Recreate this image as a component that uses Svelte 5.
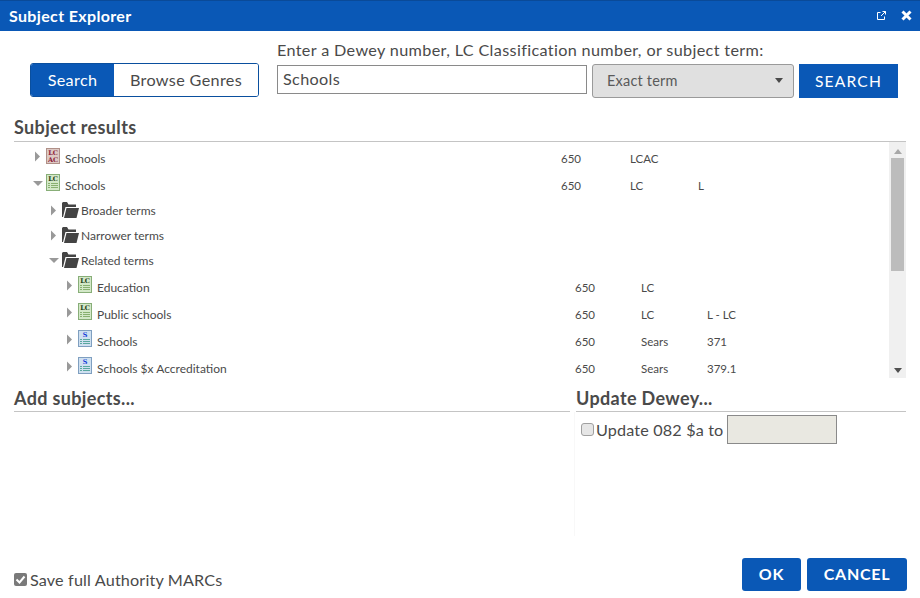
<script>
  const rows = [
    { depth: 0, open: false, icon: 'lcac', name: 'Schools', tag: '650', src: 'LCAC', cls: '' },
    { depth: 0, open: true, icon: 'lc', name: 'Schools', tag: '650', src: 'LC', cls: 'L' },
    { depth: 1, open: false, icon: 'folder', name: 'Broader terms' },
    { depth: 1, open: false, icon: 'folder', name: 'Narrower terms' },
    { depth: 1, open: true, icon: 'folder', name: 'Related terms' },
    { depth: 2, open: false, icon: 'lc', name: 'Education', tag: '650', src: 'LC', cls: '' },
    { depth: 2, open: false, icon: 'lc', name: 'Public schools', tag: '650', src: 'LC', cls: 'L - LC' },
    { depth: 2, open: false, icon: 's', name: 'Schools', tag: '650', src: 'Sears', cls: '371' },
    { depth: 2, open: false, icon: 's', name: 'Schools $x Accreditation', tag: '650', src: 'Sears', cls: '379.1' }
  ];
</script>

<div class="dialog">
  <header class="titlebar">
    <h1>Subject Explorer</h1>
    <div class="window-btns">
      <svg width="11" height="11" viewBox="0 0 11 11" fill="none" stroke="#fff" stroke-width="1">
        <path d="M4.5 2.5H1.5V9.5H8.5V6.5"/>
        <path d="M5 6L9.5 1.5M6.5 1.5H9.5V4.5"/>
      </svg>
      <svg width="11" height="11" viewBox="0 0 11 11" fill="none" stroke="#fff" stroke-width="3">
        <path d="M1.5 1.5L9.5 9.5M9.5 1.5L1.5 9.5"/>
      </svg>
    </div>
  </header>

  <section class="search-row">
    <div class="segmented">
      <button class="seg active">Search</button>
      <button class="seg">Browse Genres</button>
    </div>
    <div class="search-field">
      <label for="term">Enter a Dewey number, LC Classification number, or subject term:</label>
      <div class="search-controls">
        <input id="term" type="text" value="Schools" />
        <div class="select">
          <span>Exact term</span>
          <i class="caret"></i>
        </div>
        <button class="search-btn">SEARCH</button>
      </div>
    </div>
  </section>

  <section class="results">
    <h2>Subject results</h2>
    <div class="tree-wrap">
      <div class="tree">
        {#each rows as row}
          <div class="row depth-{row.depth}">
            <div class="name">
              {#if row.open}
                <svg class="toggle" width="11" height="11" viewBox="0 0 11 11"><path d="M0 3H10L5 8Z" fill="#999"/></svg>
              {:else}
                <svg class="toggle" width="11" height="11" viewBox="0 0 11 11"><path d="M2 0.5V10.5L7 5.5Z" fill="#999"/></svg>
              {/if}
              {#if row.icon === 'folder'}
                <svg class="folder" width="17" height="17" viewBox="0 0 17 17">
                  <path d="M0 2V16H1L3.5 6H14V3.5H6.5L5 1H1Z" fill="#444"/>
                  <path d="M4.5 7H17L14.5 17H2Z" fill="#444"/>
                </svg>
              {:else if row.icon === 'lcac'}
                <svg class="book" width="14" height="16" viewBox="0 0 14 16">
                  <rect x="0.5" y="0.5" width="13" height="15" fill="#ddc9c4" stroke="#b09088"/>
                  <text x="7" y="7" class="mark" fill="#8c1f3c">LC</text>
                  <text x="7" y="14" class="mark" fill="#8c1f3c">AC</text>
                </svg>
              {:else}
                <svg class="book" width="14" height="17" viewBox="0 0 14 17">
                  <rect x="0.5" y="0.5" width="13" height="16" fill={row.icon === 's' ? '#cfe0f0' : '#d3e8c8'} stroke={row.icon === 's' ? '#7f9fc0' : '#88ae78'}/>
                  <text x="7" y="7" class="mark" fill={row.icon === 's' ? '#1038d8' : '#1c3a14'}>{row.icon === 's' ? 'S' : 'LC'}</text>
                  <path d="M2 9.5H4M5 9.5H12M2 11.5H4M5 11.5H12M2 13.5H4M5 13.5H12" stroke={row.icon === 's' ? '#5aa8a0' : '#88b070'} fill="none"/>
                </svg>
              {/if}
              <span class="label">{row.name}</span>
            </div>
            <div>{row.tag ?? ''}</div>
            <div>{row.src ?? ''}</div>
            <div>{row.cls ?? ''}</div>
          </div>
        {/each}
      </div>
      <div class="scrollbar">
        <i class="arrow up"></i>
        <div class="thumb"></div>
        <i class="arrow down"></i>
      </div>
    </div>
  </section>

  <section class="lower">
    <div class="add-panel">
      <h2>Add subjects...</h2>
    </div>
    <div class="dewey-panel">
      <h2>Update Dewey...</h2>
      <div class="dewey-body">
        <input type="checkbox" id="dewey" />
        <label for="dewey">Update 082 $a to</label>
        <input class="dewey-input" type="text" disabled />
      </div>
    </div>
  </section>

  <footer class="footer">
    <label class="save">
      <span class="fake-check">
        <svg width="13" height="13" viewBox="0 0 13 13"><path d="M2.5 6.5L5.5 9.5L10.5 3.5" fill="none" stroke="#fff" stroke-width="2"/></svg>
      </span>
      Save full Authority MARCs
    </label>
    <div class="actions">
      <button class="action ok">OK</button>
      <button class="action cancel">CANCEL</button>
    </div>
  </footer>
</div>

<style>
  :global(body) {
    margin: 0;
    background: #fff;
  }

  .dialog {
    width: 920px;
    height: 598px;
    display: flex;
    flex-direction: column;
    font-family: Lato, "Open Sans", sans-serif;
    color: #4a4a4a;
    overflow: hidden;
  }

  .titlebar {
    box-sizing: border-box;
    height: 31px;
    flex: none;
    display: flex;
    align-items: center;
    justify-content: space-between;
    padding: 0 8px 1px 9px;
    background: #0a58b6;
    border-top: 1px solid #0a4a98;
  }

  h1 {
    margin: 0;
    font-size: 16px;
    letter-spacing: 0.35px;
    font-weight: 700;
    color: #fff;
  }

  .window-btns {
    display: flex;
    align-items: center;
    gap: 14px;
  }

  .search-row {
    flex: none;
    display: flex;
    align-items: flex-start;
    height: 83px;
    padding-left: 30px;
    box-sizing: border-box;
  }

  .segmented {
    display: flex;
    box-sizing: border-box;
    width: 229px;
    height: 34px;
    margin-top: 32px;
    border: 1px solid #0a4f9e;
    border-radius: 3px;
    overflow: hidden;
  }

  .seg {
    border: none;
    background: #fff;
    color: #4a4a4a;
    font: 16.2px Lato, sans-serif;
    letter-spacing: 0.35px;
    flex: 1;
    padding: 0 0 2px;
  }

  .seg.active {
    flex: none;
    width: 83px;
    background: #0a58b6;
    color: #fff;
  }

  .search-field {
    margin-left: 18px;
  }

  .search-field label {
    display: block;
    height: 33px;
    padding-top: 9px;
    box-sizing: border-box;
    font-size: 16.2px;
    letter-spacing: 0.35px;
    line-height: 20px;
    white-space: nowrap;
  }

  .search-controls {
    display: flex;
    align-items: flex-start;
  }

  #term {
    box-sizing: border-box;
    width: 310px;
    height: 29px;
    margin-top: 1px;
    padding: 0 5px 2px;
    border: 1px solid #8a8a8a;
    border-radius: 0;
    font: 16.2px Lato, sans-serif;
    letter-spacing: 0.35px;
    color: #4a4a4a;
  }

  .select {
    box-sizing: border-box;
    width: 202px;
    height: 34px;
    margin-left: 5px;
    display: flex;
    align-items: center;
    justify-content: space-between;
    padding: 0 10px 1px 14px;
    background: #e0e0e0;
    border: 1px solid #9a9a9a;
    border-radius: 3px;
    font-size: 14.5px;
    letter-spacing: 0.2px;
    color: #5a5a5a;
  }

  .caret {
    width: 0;
    height: 0;
    border-left: 4px solid transparent;
    border-right: 4px solid transparent;
    border-top: 5px solid #4a4a4a;
  }

  .search-btn {
    width: 99px;
    height: 34px;
    margin-left: 5px;
    border: none;
    background: #0a58b6;
    color: #fff;
    font: 15.6px Lato, sans-serif;
    letter-spacing: 1.2px;
    padding: 0;
  }

  h2 {
    margin: 0;
    height: 28px;
    box-sizing: border-box;
    padding-top: 3px;
    font-size: 18px;
    letter-spacing: 0.35px;
    line-height: 20px;
    font-weight: 700;
    color: #4a4a4a;
    border-bottom: 1px solid #c4c4c4;
  }

  .results {
    flex: none;
    margin: 0 14px;
    height: 264px;
  }

  .tree-wrap {
    display: flex;
    height: 236px;
  }

  .tree {
    flex: 1;
    overflow: hidden;
    padding-top: 2px;
  }

  .row {
    display: grid;
    grid-template-columns: 547px 69px 68px 1fr;
    align-items: center;
    box-sizing: border-box;
    height: 27px;
    padding-top: 2px;
    font-size: 11.5px;
  }

  .row.depth-1 {
    height: 25px;
    padding-top: 0;
  }

  .row.depth-2 {
    grid-template-columns: 561px 66px 66px 1fr;
  }

  .name {
    display: flex;
    align-items: center;
    font-size: 12px;
  }

  .depth-0 .name {
    padding-left: 19px;
  }

  .depth-1 .name {
    padding-left: 35px;
  }

  .depth-2 .name {
    padding-left: 51px;
  }

  .toggle {
    flex: none;
    margin-right: 2px;
    margin-top: -5px;
  }

  .depth-1 .toggle {
    margin-top: -1px;
  }

  .book {
    flex: none;
    margin-top: -6px;
  }

  .folder {
    flex: none;
    margin-top: -2px;
  }

  .mark {
    font-family: "DejaVu Serif", serif;
    font-size: 6.5px;
    font-weight: 700;
    text-anchor: middle;
  }

  .label {
    margin-left: 5px;
    white-space: nowrap;
  }

  .depth-1 .label {
    margin-left: 2px;
  }

  .scrollbar {
    flex: none;
    width: 17px;
    background: #f0f0f0;
    display: flex;
    flex-direction: column;
    align-items: center;
    padding-top: 7px;
    box-sizing: border-box;
  }

  .arrow {
    width: 0;
    height: 0;
    border-left: 4px solid transparent;
    border-right: 4px solid transparent;
  }

  .arrow.up {
    border-bottom: 5px solid #a8a8a8;
  }

  .arrow.down {
    margin-top: auto;
    margin-bottom: 5px;
    border-top: 5px solid #505050;
  }

  .thumb {
    width: 13px;
    height: 113px;
    margin-top: 4px;
    background: #bcbcbc;
  }

  .lower {
    flex: 1;
    display: flex;
    margin: 0 14px;
    min-height: 0;
  }

  .add-panel {
    width: 556px;
  }

  .dewey-panel {
    margin-left: 6px;
    flex: 1;
  }

  .lower h2 {
    height: 34px;
    padding-top: 11px;
    line-height: 18px;
  }

  .dewey-body {
    display: flex;
    align-items: center;
    height: 124px;
    margin-left: -2px;
    padding: 3px 0 93px 6px;
    box-sizing: border-box;
    border-left: 1px solid #f8f8f8;
    font-size: 16.2px;
    letter-spacing: 0.15px;
    white-space: nowrap;
  }

  .dewey-body input[type="checkbox"] {
    appearance: none;
    box-sizing: border-box;
    width: 13px;
    height: 13px;
    margin: 0 2px 0 0;
    background: #e6e6e6;
    border: 1px solid #a0a0a0;
    border-radius: 3px;
  }

  .dewey-input {
    box-sizing: border-box;
    width: 110px;
    height: 29px;
    margin-left: 4px;
    background: #e9e8e1;
    border: 1px solid #8a8a8a;
  }

  .footer {
    flex: none;
    display: flex;
    align-items: flex-start;
    justify-content: space-between;
    height: 40px;
    margin: 0 13px 0 14px;
  }

  .save {
    display: flex;
    align-items: center;
    gap: 3px;
    margin-top: 11px;
    height: 20px;
    font-size: 16.2px;
    letter-spacing: 0.15px;
    white-space: nowrap;
  }

  .fake-check {
    width: 13px;
    height: 13px;
    background: #7a7a7a;
    border-radius: 2px;
    display: block;
  }

  .fake-check svg {
    display: block;
  }

  .actions {
    display: flex;
    gap: 6px;
  }

  .action {
    height: 33px;
    border: none;
    border-radius: 3px;
    background: #0a58b6;
    color: #fff;
    font: 700 16px Lato, sans-serif;
    letter-spacing: 0.7px;
    padding: 0 0 2px;
  }

  .ok {
    width: 59px;
  }

  .cancel {
    width: 100px;
  }
</style>
